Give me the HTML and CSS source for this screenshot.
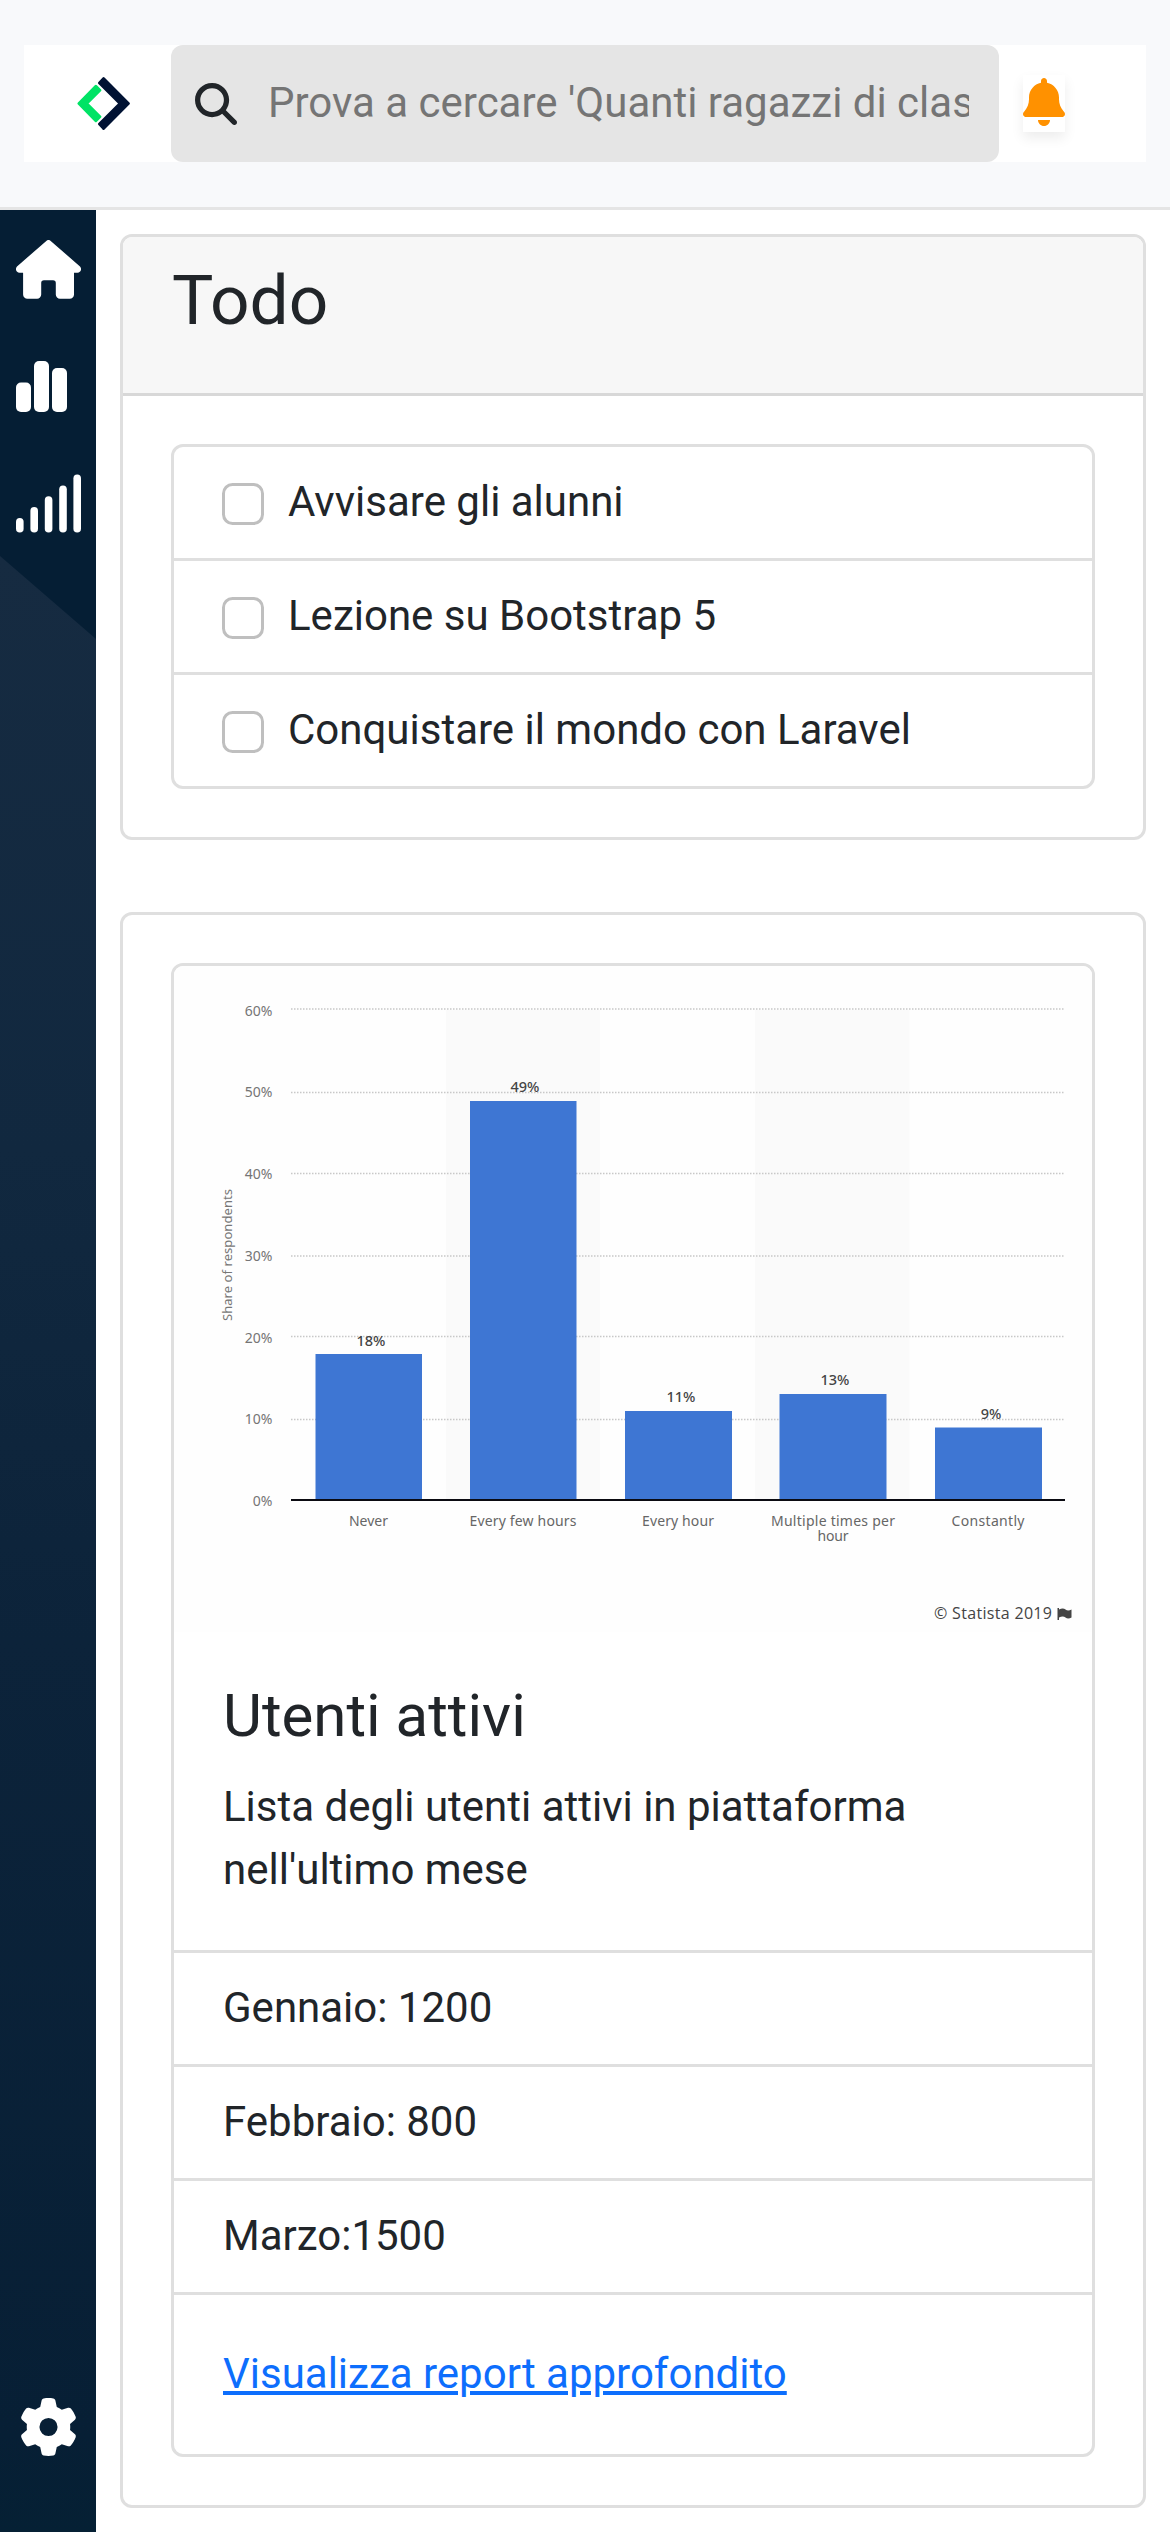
FILE: index.html
```html
<!DOCTYPE html>
<html lang="it">
<head>
<meta charset="utf-8">
<title>Dashboard</title>
<link rel="stylesheet" href="styles.css">
</head>
<body>
<header class="topbar">
  <div class="topbar-inner">
    <a class="brand" href="#" aria-label="Home">
      <svg class="logo" viewBox="0 0 160 160">
        <path class="logo-left" d="M57 28 6 80l51 52 12-12-40-40 40-40z"/>
        <path class="logo-right" d="M80 5l75 75-75 75-12-13 62-62-62-62z"/>
      </svg>
    </a>
    <form class="search">
      <svg class="search-icon" viewBox="0 0 512 512"><path d="M416 208c0 45.900-14.900 88.300-40 122.700L502.600 457.400c12.500 12.500 12.500 32.800 0 45.300s-32.800 12.500-45.300 0L330.700 376c-34.400 25.200-76.800 40-122.700 40C93.100 416 0 322.900 0 208S93.100 0 208 0S416 93.100 416 208zM208 352a144 144 0 1 0 0-288 144 144 0 1 0 0 288z"/></svg>
      <input class="search-input" type="text" placeholder="Prova a cercare 'Quanti ragazzi di classe">
    </form>
    <div class="alerts">
      <span class="bell"><svg class="bell-icon" viewBox="0 0 448 512"><path d="M224 0c-17.700 0-32 14.300-32 32V51.200C119 66 64 130.600 64 208v18.800c0 47-17.300 92.400-48.500 127.600l-7.400 8.300c-8.400 9.400-10.400 22.900-5.300 34.400S19.400 416 32 416H416c12.600 0 24-7.400 29.200-18.900s3.100-25-5.300-34.400l-7.400-8.300C401.300 319.200 384 273.900 384 226.800V208c0-77.400-55-142-128-156.800V32c0-17.700-14.300-32-32-32zm45.300 493.300c12-12 18.700-28.300 18.700-45.300H224 160c0 17 6.700 33.300 18.700 45.300s28.300 18.700 45.300 18.700s33.300-6.700 45.300-18.700z"/></svg></span>
    </div>
  </div>
</header>
<div class="layout">
  <nav class="sidebar">
    <svg class="nav-bg" viewBox="0 0 96 2322" preserveAspectRatio="none">
      <defs><linearGradient id="fade" x1="0" y1="0" x2="0" y2="1"><stop offset="0" stop-color="#162b41"/><stop offset=".3" stop-color="#11283f"/><stop offset=".55" stop-color="#0c233a"/><stop offset=".95" stop-color="#071f35"/><stop offset="1" stop-color="#052034"/></linearGradient></defs>
      <path fill="url(#fade)" d="M0 346 96 429V2322H0z"/>
    </svg>
    <svg class="nav-icon" viewBox="0 0 65 59"><path d="M30.300.9a3.400 3.400 0 0 1 4.400 0L64 26.500c2.300 2.500.6 6.300-2.500 6.300H58V54.500a4.300 4.300 0 0 1-4.300 4.300H44a4.200 4.200 0 0 1-4.200-4.200V43a2.800 2.800 0 0 0-2.800-2.800h-9a2.800 2.800 0 0 0-2.800 2.800v11.600a4.200 4.200 0 0 1-4.200 4.200h-9.600a4.300 4.300 0 0 1-4.300-4.300V32.800H3.500C.4 32.800-1.300 29 1 26.500z"/></svg>
    <svg class="nav-icon" viewBox="0 0 65 59"><rect y="25.500" width="15" height="29.500" rx="5"/><rect x="18" y="4" width="15" height="51" rx="5"/><rect x="36" y="11" width="15" height="44" rx="5"/></svg>
    <svg class="nav-icon" viewBox="0 0 65 59"><rect y="44" width="7.600" height="14.600" rx="3.800"/><rect x="14.400" y="33" width="7.600" height="25.600" rx="3.800"/><rect x="28.800" y="22.200" width="7.600" height="36.400" rx="3.800"/><rect x="43.200" y="11.400" width="7.600" height="47.200" rx="3.800"/><rect x="57.400" y=".6" width="7.600" height="58" rx="3.800"/></svg>
    <svg class="nav-icon nav-settings" viewBox="0 0 512 512"><path d="M495.9 166.6c3.2 8.7 .5 18.4-6.4 24.6l-43.300 39.4c1.1 8.3 1.7 16.8 1.7 25.4s-.6 17.1-1.7 25.4l43.300 39.4c6.9 6.2 9.6 15.9 6.4 24.6c-4.4 11.9-9.7 23.3-15.8 34.3l-4.7 8.1c-6.6 11-14 21.4-22.1 31.2c-5.9 7.2-15.7 9.6-24.5 6.8l-55.7-17.7c-13.4 10.3-28.2 18.9-44 25.4l-12.5 57.1c-2 9.1-9 16.3-18.2 17.8c-13.8 2.3-28 3.5-42.5 3.5s-28.7-1.2-42.5-3.5c-9.2-1.5-16.2-8.7-18.2-17.8l-12.5-57.1c-15.8-6.5-30.6-15.1-44-25.4L83.1 425.9c-8.8 2.8-18.6 .3-24.5-6.8c-8.1-9.8-15.5-20.2-22.1-31.2l-4.7-8.1c-6.1-11-11.4-22.4-15.8-34.3c-3.2-8.7-.5-18.4 6.4-24.6l43.3-39.4C64.6 273.1 64 264.6 64 256s.6-17.1 1.7-25.4L22.400 191.2c-6.9-6.2-9.6-15.9-6.4-24.6c4.4-11.9 9.7-23.3 15.8-34.3l4.7-8.1c6.6-11 14-21.4 22.1-31.2c5.9-7.2 15.7-9.6 24.5-6.8l55.7 17.7c13.4-10.3 28.2-18.9 44-25.4l12.5-57.1c2-9.1 9-16.3 18.2-17.8C227.3 1.2 241.5 0 256 0s28.7 1.2 42.5 3.5c9.2 1.5 16.2 8.7 18.2 17.8l12.5 57.1c15.8 6.5 30.6 15.1 44 25.4l55.7-17.7c8.8-2.8 18.6-.3 24.5 6.8c8.1 9.8 15.5 20.2 22.1 31.2l4.7 8.1c6.1 11 11.400 22.4 15.8 34.300zM256 336a80 80 0 1 0 0-160 80 80 0 1 0 0 160z"/></svg>
  </nav>
  <main class="content">
    <section class="card">
      <div class="card-header"><h3 class="card-heading">Todo</h3></div>
      <div class="card-body">
        <ul class="list-group">
          <li class="list-item"><input class="check" type="checkbox" id="t1"><label for="t1">Avvisare gli alunni</label></li>
          <li class="list-item"><input class="check" type="checkbox" id="t2"><label for="t2">Lezione su Bootstrap 5</label></li>
          <li class="list-item"><input class="check" type="checkbox" id="t3"><label for="t3">Conquistare il mondo con Laravel</label></li>
        </ul>
      </div>
    </section>
    <section class="card">
      <div class="card-body">
        <article class="card report">
          <svg class="chart" viewBox="174 966 918 666">
            <g class="band"><rect x="446" y="1010" width="154" height="489"/><rect x="755" y="1010" width="154.500" height="489"/></g>
            <g class="grid">
              <path d="M291 1009H1065M291 1092.500H1065M291 1173.500H1065M291 1256H1065M291 1336.500H1065M291 1419.500H1065"/>
            </g>
            <g class="bar">
              <rect x="315.500" y="1354" width="106.500" height="146"/>
              <rect x="470" y="1101" width="106.500" height="399"/>
              <rect x="625" y="1411" width="107" height="89"/>
              <rect x="779.500" y="1394" width="107" height="106"/>
              <rect x="935" y="1427.500" width="107" height="72.500"/>
            </g>
            <path class="axis" d="M291 1500H1065"/>
            <g class="tick">
              <text x="272.500" y="1016">60%</text><text x="272.500" y="1097">50%</text><text x="272.500" y="1179">40%</text><text x="272.500" y="1260.500">30%</text><text x="272.500" y="1343">20%</text><text x="272.500" y="1424">10%</text><text x="272.500" y="1506">0%</text>
            </g>
            <g class="value">
              <text x="371" y="1345.500">18%</text><text x="525" y="1092">49%</text><text x="681" y="1402">11%</text><text x="835" y="1385">13%</text><text x="991" y="1418.500">9%</text>
            </g>
            <g class="category">
              <text x="368.500" y="1525.500" textLength="39">Never</text>
              <text x="523" y="1525.500" textLength="107">Every few hours</text>
              <text x="678" y="1525.500" textLength="72">Every hour</text>
              <text x="833" y="1525.500" textLength="124">Multiple times per</text>
              <text x="833" y="1541" textLength="31">hour</text>
              <text x="988" y="1525.500" textLength="73">Constantly</text>
            </g>
            <text class="axis-title" transform="translate(232 1321) rotate(-90)" textLength="132">Share of respondents</text>
            <text class="credit" x="934" y="1619" textLength="118">© Statista 2019</text>
            <path class="flag" d="M1057.500 1608h1.500v1.500q4-1.800 6.500 0t6 0v8q-3.500 1.800-6 0t-6.500 0v2.500h-1.500z"/>
          </svg>
          <div class="card-body">
            <h5 class="card-title">Utenti attivi</h5>
            <p class="card-text">Lista degli utenti attivi in piattaforma nell'ultimo mese</p>
          </div>
          <ul class="stats">
            <li class="stat">Gennaio: 1200</li>
            <li class="stat">Febbraio: 800</li>
            <li class="stat">Marzo:1500</li>
          </ul>
          <div class="card-body"><a class="link" href="#">Visualizza report approfondito</a></div>
        </article>
      </div>
    </section>
  </main>
</div>
</body>
</html>
```
FILE: styles.css
```css
* { box-sizing: border-box; }

body {
  margin: 0;
  height: 2532px;
  overflow: hidden;
  display: flex;
  flex-direction: column;
  background: #fff;
  color: #212529;
  font: 42px/1.5 Roboto, sans-serif;
}

ul, h3, h5, p { margin: 0; padding: 0; }
ul { list-style: none; }

/* Top bar */
.topbar {
  flex: none;
  height: 210px;
  padding: 45px 24px;
  background: #f8f9fb;
  border-bottom: 3px solid #e5e5e5;
}
.topbar-inner {
  display: grid;
  grid-template-columns: 147px 828px 147px;
  height: 117px;
  background: #fff;
}
.brand { display: flex; align-items: center; padding-left: 53px; }
.logo { width: 53px; height: 53px; stroke-width: 9; stroke-linejoin: round; }
.logo-left { fill: #00e365; stroke: #00e365; }
.logo-right { fill: #001233; stroke: #001233; }
.search {
  display: flex;
  align-items: center;
  padding: 0 30px 0 24px;
  gap: 31px;
  border-radius: 12px;
  background: #e5e5e5;
}
.search-icon { flex: none; width: 42px; height: 42px; fill: currentColor; }
.search-input {
  flex: 1;
  min-width: 0;
  padding: 0 0 2px;
  border: 0;
  background: none;
  font: inherit;
  height: 63px;
}
.search-input::placeholder { color: #757575; opacity: 1; }
.alerts { display: flex; align-items: center; padding-left: 24px; }
.bell {
  display: flex;
  align-items: center;
  width: 42px;
  height: 57px;
  padding-bottom: 3px;
  box-shadow: 0 6px 12px rgba(0, 0, 0, .075);
}
.bell-icon { width: 42px; height: 48px; fill: #ff9100; }

/* Layout */
.layout { flex: 1; display: flex; min-height: 0; }
.sidebar {
  position: relative;
  width: 96px;
  padding: 30px 15px 76px 16px;
  display: flex;
  flex-direction: column;
  gap: 58px;
  background: #051e34;
}
.nav-bg { position: absolute; inset: 0; width: 96px; height: 100%; }
.nav-icon { position: relative; flex: none; width: 65px; height: 59px; fill: #fff; }
.nav-settings { height: 58px; margin-top: auto; }
.content {
  flex: 1;
  display: flex;
  flex-direction: column;
  gap: 72px;
  padding: 24px;
}

/* Cards */
.card { border: 3px solid #dfdfdf; border-radius: 12px; overflow: hidden; flex: none; }
.card-header {
  height: 159px;
  padding: 22px 49px;
  background: #f7f7f7;
  border-bottom: 3px solid #d8d8d8;
}
.card-heading { font-size: 69.400px; font-weight: 400; line-height: 1.2; }
.card-body { padding: 48px; }
.report .card-body { padding-left: 49px; }
.card-title { margin-bottom: 23px; font-size: 60px; font-weight: 400; line-height: 1.2; }
.card-text { margin-bottom: 1px; }

.list-group { border: 3px solid #dfdfdf; border-radius: 12px; }
.list-item {
  display: flex;
  gap: 24px;
  height: 114px;
  padding: 23px 48px 25px;
  border-bottom: 3px solid #dfdfdf;
}
.list-item:last-child { height: 111px; border-bottom: 0; }
.check {
  appearance: none;
  flex: none;
  width: 42px;
  height: 42px;
  margin: 13px 0 0;
  border: 3px solid #bfbfbf;
  border-radius: 10.500px;
}

.stats { border: solid #dfdfdf; border-width: 3px 0; }
.stat { padding: 23px 48px 25px 49px; }
.stat + .stat { border-top: 3px solid #dfdfdf; }
.link { display: block; margin: -1px 0 1px; color: #0d6efd; }

/* Chart */
.chart {
  display: block;
  width: 918px;
  height: 666px;
  background: #fefefe;
  font-family: "Noto Sans", sans-serif;
  font-size: 14px;
}
.band { fill: #fafafa; }
.grid { fill: none; stroke: #c8c8c8; stroke-width: 1.500; stroke-dasharray: 1.500 1.500; }
.bar { fill: #3e76d3; }
.axis { stroke: #0b0b12; stroke-width: 1.800; }
.tick { fill: #757575; text-anchor: end; }
.value { fill: #444; text-anchor: middle; font-size: 14.500px; font-weight: 500; }
.category { fill: #666; text-anchor: middle; }
.axis-title { fill: #777; font-size: 13px; }
.credit { fill: #444; font-family: "Open Sans", sans-serif; font-size: 16px; }
.flag { fill: #444; }
```
